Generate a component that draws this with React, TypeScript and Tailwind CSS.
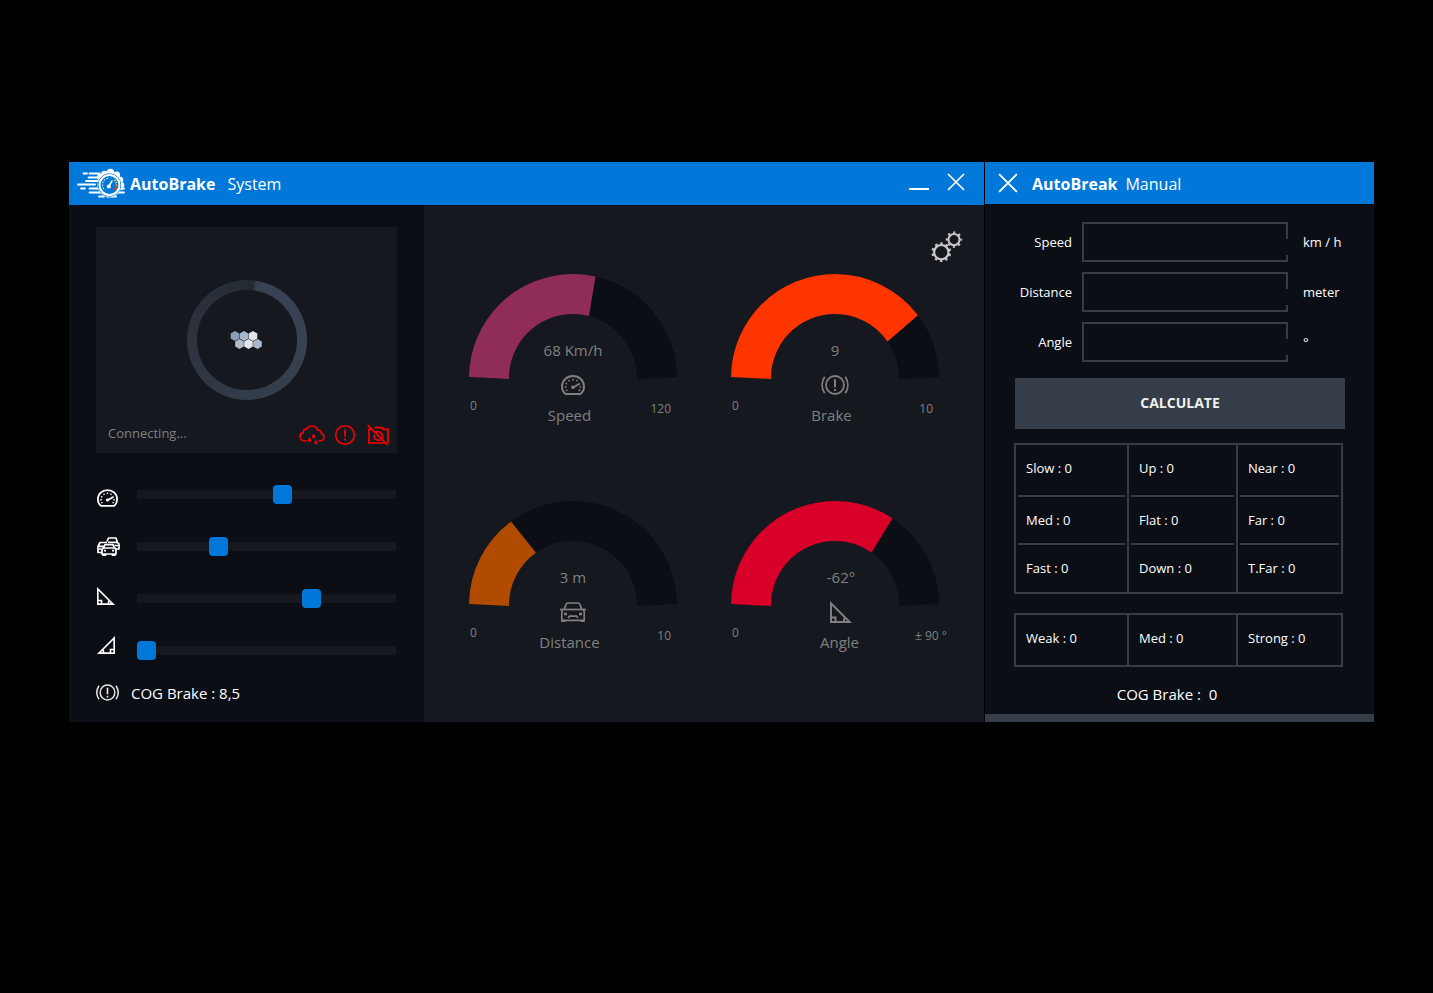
import type { ReactNode } from "react";

type IconProps = { className?: string };

function LogoIcon() {
  return (
    <svg viewBox="0 0 50 34" className="h-[34px] w-[50px]" aria-hidden="true">
      <g fill="#fff" transform="translate(-1 0)">
        <circle cx="33.500" cy="18" r="12" />
        <circle cx="24.500" cy="9.800" r="3.300" />
        <circle cx="28.500" cy="7" r="3.300" />
        <circle cx="34.500" cy="5.500" r="3.800" />
        <circle cx="40.500" cy="8" r="3.600" />
        <circle cx="44" cy="13" r="3.300" />
        <circle cx="45.300" cy="18.300" r="3" />
        <path d="M22 10h6v8h-6zM33.500 18h13v5h-13z" />
      </g>
      <path
        d="M6.500 6.500h3.500M12.500 6.500h10M11.500 10.500h11M9 14h12M1 17.500h17M4 21.500h4M12.500 21.500h12M12.500 25.500h12M39 25.500h8M41 21.500h6M22 29.500h5M30 29.500h9"
        stroke="#fff"
        strokeWidth="1.800"
        strokeLinecap="round"
      />
      <g transform="translate(-1 0)">
        <circle cx="33.500" cy="18" r="11.300" stroke="#0078d9" strokeWidth="0.900" fill="none" />
        <circle cx="33.500" cy="18" r="9.900" fill="#0078d9" stroke="#fff" strokeWidth="1.800" />
        <path d="M34.500 10.600l1.600.3M37 11.400l1.200.8" stroke="#2fa36b" strokeWidth="1.900" />
        <path d="M38.800 12.700l.9 1.400M40 15l.3 1.300" stroke="#e5d23a" strokeWidth="1.900" />
        <path d="M40.500 17.300v1.800" stroke="#f28a2c" strokeWidth="1.900" />
        <path d="M40.200 20.200l-1.400 2.900" stroke="#e2402f" strokeWidth="2.200" />
        <path d="M32 11.200c-3.800.8-5.700 3.700-5.400 7.200.2 2 1 3.500 2.300 4.600" stroke="#d8e8f7" strokeWidth="1.100" strokeDasharray="1.600 1.400" fill="none" />
        <path d="M33 19l3-5" stroke="#fff" strokeWidth="1.500" strokeLinecap="round" />
        <circle cx="32.800" cy="19.500" r="2" fill="#fff" />
      </g>
    </svg>
  );
}

function CloseIcon({ className }: IconProps) {
  return (
    <svg viewBox="0 0 18 18" className={className} stroke="#fff" strokeWidth="1.7" fill="none" aria-hidden="true">
      <path d="M1 1l16 16M17 1L1 17" />
    </svg>
  );
}

function GaugeIcon({ className }: IconProps) {
  return (
    <svg viewBox="0 0 24 20" className={className} fill="none" stroke="currentColor" aria-hidden="true">
      <path
        d="M4.500 19h15c2-1.600 3.500-4.500 3.500-7.500C23 5.300 18 1 12 1S1 5.300 1 11.500C1 14.500 2.500 17.400 4.500 19z"
        strokeWidth="2"
        strokeLinejoin="round"
      />
      <path
        d="M3.700 12h1.800M4.600 8.200l1.500.8M7.500 5l1 1.300M12 3.700v1.800M16.500 5l-1 1.300M18.600 12h1.700M4.800 15.700l1.500-.7M19.200 15.700l-1.500-.7"
        strokeWidth="1.500"
      />
      <path d="M12 12.500l7-4" strokeWidth="2" />
      <circle cx="12" cy="12.300" r="1.800" fill="currentColor" stroke="none" />
    </svg>
  );
}

function BrakeIcon({ className }: IconProps) {
  return (
    <svg viewBox="0 0 28 20" className={className} fill="none" stroke="currentColor" strokeWidth="1.800" aria-hidden="true">
      <circle cx="14" cy="10" r="9" />
      <path d="M3.700 1.800c-3.400 5-3.400 11.400 0 16.400M24.300 1.800c3.400 5 3.400 11.400 0 16.400" />
      <path d="M14 4.200v8M14 14v2" strokeWidth="2" />
    </svg>
  );
}

function CarIcon({ className }: IconProps) {
  return (
    <svg viewBox="0 0 26 20" className={className} fill="none" stroke="currentColor" strokeWidth="1.700" aria-hidden="true">
      <path d="M4.200 7.500l1.800-5C6.400 1.500 7 1 8 1h10c1 0 1.600.5 2 1.500l1.800 5" />
      <path d="M0 7.500h26" />
      <path d="M2.500 8L1.800 10v8.500M23.500 8l.7 2v8.500M1 18.300h24" />
      <path d="M1.500 19h4M20.500 19h4" strokeWidth="2" />
      <path d="M4 12h3M19 12h3" strokeWidth="2.400" />
      <path d="M8 16l1.500-1.800h7L18 16" />
    </svg>
  );
}

function CarsIcon({ className }: IconProps) {
  return (
    <svg viewBox="0 0 23 19" className={className} fill="none" stroke="currentColor" strokeWidth="1.700" strokeLinejoin="round" aria-hidden="true">
      <path d="M10 4.500L11.500 1h7.500l1.500 4.500L22 7v5h-3" />
      <path d="M11 5.300h10M17.500 8.500H21" />
      <path d="M5 15.500H1V9.500L3 5.500h7" />
      <path d="M2 9.300h5M2 12h2.500" />
      <path d="M6.500 11L8 7.700h8l1.500 3.300" />
      <path d="M6 11h12l1 2v4H5v-4z" />
      <path d="M6 17v1.200h2.500V17M15.500 17v1.200H18V17M7 13.700h2M15 13.700h2" />
    </svg>
  );
}

function TriangleIcon({ className }: IconProps) {
  return (
    <svg viewBox="0 0 22 22" className={className} fill="none" stroke="currentColor" strokeWidth="2" aria-hidden="true">
      <path d="M1 2.400V21h18.600z" />
      <path d="M1 16.500h4.500V21M15.500 16.500c-1.600 1-1.800 2.600-1.500 4.500" />
    </svg>
  );
}

function GearsIcon() {
  return (
    <svg viewBox="0 0 32 32" className="h-8 w-8" fill="none" stroke="#c9c9c9" aria-hidden="true">
      <circle cx="10.300" cy="21.200" r="7.200" strokeWidth="2.200" />
      <circle cx="10.300" cy="21.200" r="8.800" strokeWidth="2.200" strokeDasharray="2.300 3.229" strokeDashoffset="-1.600" />
      <circle cx="23" cy="8.600" r="5.600" strokeWidth="2.100" />
      <circle cx="23" cy="8.600" r="7.200" strokeWidth="2" strokeDasharray="2.200 3.455" strokeDashoffset="1.100" />
    </svg>
  );
}

function CloudRainIcon() {
  return (
    <svg viewBox="0 0 26 20" className="h-[20px] w-[26px]" fill="none" stroke="#fb0000" strokeWidth="1.600" strokeLinecap="round" aria-hidden="true">
      <path d="M7 15.800H5.500C3 15.800 1 14 1 11.700c0-2 1.500-3.500 3.200-3.800C4 5.500 5.500 3.800 7.600 4.200 8.500 2.300 10.500 1 13 1c3 0 5 1.700 5.600 4.200 2-.3 3.600 1 3.600 3 1.700.5 2.800 1.800 2.800 3.600 0 2.300-1.700 4-4 4h-.8" />
      <path d="M14.500 8.600c1 1.500 1.500 2.300 1.500 3.100a1.500 1.500 0 01-3 0c0-.8.500-1.600 1.500-3.100zM10.500 12.300c1 1.500 1.500 2.300 1.500 3.100a1.500 1.500 0 01-3 0c0-.8.500-1.600 1.500-3.100zM16.900 15c1 1.500 1.400 2.100 1.400 2.900a1.400 1.400 0 01-2.800 0c0-.8.400-1.400 1.400-2.900z" fill="#fb0000" stroke="none" />
    </svg>
  );
}

function AlertIcon() {
  return (
    <svg viewBox="0 0 22 22" className="h-[22px] w-[22px]" fill="none" stroke="#fb0000" strokeWidth="1.600" aria-hidden="true">
      <circle cx="11" cy="11" r="9.300" />
      <path d="M11 5.800v6.700M11 14.200v2" strokeWidth="1.800" />
    </svg>
  );
}

function CameraOffIcon() {
  return (
    <svg viewBox="0 0 22 22" className="h-[22px] w-[22px]" fill="none" stroke="#fb0000" strokeWidth="1.700" aria-hidden="true">
      <path d="M.7 1.200l20 20" />
      <path d="M7.500 3.700H15l1 1.600h5v14M2 4.500v14.500h15.500M2 5.500h2.500" />
      <path d="M8.800 8.300c3-1.600 6.600.4 6.700 3.900 0 1-.2 1.800-.6 2.500M13.500 15.800c-3.600 1.600-7-1-6.500-5" />
    </svg>
  );
}

const hexagons = [
  { x: 5, y: 6, fill: "#8b9fb8" },
  { x: 14, y: 6, fill: "#a8b7c9" },
  { x: 23, y: 6, fill: "#e1e5eb" },
  { x: 9.5, y: 14, fill: "#b0bdcd" },
  { x: 18.5, y: 14, fill: "#e1e5eb" },
  { x: 27.5, y: 14, fill: "#a8b7c9" },
];

function Spinner() {
  return (
    <div className="grid h-[120px] w-[120px] place-items-center rounded-full bg-[conic-gradient(#242b33_0deg,#232a32_6deg,#394252_10deg,#394252_80deg,#35404c_130deg,#323a47_200deg,#2b323c_280deg,#262c34_360deg)]">
      <div className="grid h-[100px] w-[100px] place-items-center rounded-full bg-[#15181f]">
        <svg viewBox="0 0 33 20" className="h-[20px] w-[33px]" aria-hidden="true">
          {hexagons.map((h) => (
            <path
              key={`${h.x}-${h.y}`}
              transform={`translate(${h.x} ${h.y})`}
              d="M0-5L4.300-2.500V2.500L0 5-4.300 2.500V-2.500z"
              fill={h.fill}
            />
          ))}
        </svg>
      </div>
    </div>
  );
}

const sliders = [
  { id: "speed", label: "Speed", max: 120, value: 68, icon: <GaugeIcon className="h-[18px] w-[21px]" /> },
  { id: "distance", label: "Distance", max: 10, value: 3, icon: <CarsIcon className="h-[19px] w-[23px]" /> },
  { id: "down", label: "Downhill angle", max: 90, value: 62, icon: <TriangleIcon className="h-[18px] w-[18px]" /> },
  { id: "up", label: "Uphill angle", max: 90, value: 0, icon: <TriangleIcon className="h-[18px] w-[18px] -scale-x-100" /> },
];

function Sidebar() {
  return (
    <aside className="bg-[#0b0e15] px-[27px] pt-[22px] pb-[14px]">
      <div className="flex h-[226px] flex-col items-center bg-[#15181f] pt-[53px]">
        <Spinner />
        <div className="mt-auto flex h-[36px] w-full items-center pr-2 pl-3">
          <span className="pb-[2px] text-[13px] text-[#808080]">Connecting...</span>
          <div className="ml-auto flex items-center gap-[11px]">
            <div className="flex items-center gap-[9px]">
              <CloudRainIcon />
              <AlertIcon />
            </div>
            <CameraOffIcon />
          </div>
        </div>
      </div>

      <div className="mt-[15px] flex gap-[17px] pr-px text-white">
        <div className="flex w-6 flex-col pt-[5px]">
          {sliders.map((s) => (
            <label key={s.id} htmlFor={s.id} aria-label={s.label} className="flex h-[49px] items-center pl-px">
              {s.icon}
            </label>
          ))}
        </div>
        <div className="flex flex-1 flex-col">
          {sliders.map((s) => (
            <div key={s.id} className="flex h-[52px] items-center">
              <input
                id={s.id}
                type="range"
                min={0}
                max={s.max}
                defaultValue={s.value}
                className="m-0 h-[19px] w-full appearance-none bg-transparent [&::-webkit-slider-runnable-track]:h-[9px] [&::-webkit-slider-runnable-track]:bg-[#15181f] [&::-webkit-slider-thumb]:-mt-[5px] [&::-webkit-slider-thumb]:h-[19px] [&::-webkit-slider-thumb]:w-[19px] [&::-webkit-slider-thumb]:appearance-none [&::-webkit-slider-thumb]:rounded-[4px] [&::-webkit-slider-thumb]:bg-[#0078d9]"
              />
            </div>
          ))}
        </div>
      </div>

      <div className="flex h-8 items-center gap-3 text-white">
        <BrakeIcon className="h-[17px] w-[23px] text-[#e4e4e4]" />
        <span className="pt-[2px] text-[15px]">COG Brake : 8,5</span>
      </div>
    </aside>
  );
}

type GaugeProps = {
  name: string;
  value: string;
  max: string;
  color: string;
  outerX: number;
  innerX: number;
  icon: ReactNode;
  shifted?: boolean;
};

const arcY = (radius: number, x: number) => 104 - Math.sqrt(radius * radius - (x - 104) * (x - 104));

function bandPath(outerX: number, innerX: number) {
  const outerTop = outerX > 104 ? "A104 104 0 0 1 104 0" : "";
  const innerTop = innerX > 104 ? "A64 64 0 0 0 104 40" : "";
  return `M0 103${outerTop}A104 104 0 0 1 ${outerX} ${arcY(104, outerX)}L${innerX} ${arcY(64, innerX)}${innerTop}A64 64 0 0 0 40 105z`;
}

function Gauge({ name, value, max, color, outerX, innerX, icon, shifted }: GaugeProps) {
  return (
    <figure className="grid h-[153px] text-[#808080]">
      <svg viewBox="0 0 208 106" className="col-start-1 row-start-1 h-[106px] w-[208px]" aria-hidden="true">
        <path
          d="M0 103A104 104 0 0 1 104 0A104 104 0 0 1 208 103L168 105A64 64 0 0 0 104 40A64 64 0 0 0 40 105z"
          fill="#0b0e15"
        />
        <path d={bandPath(outerX, innerX)} fill={color} />
      </svg>
      <figcaption className="col-start-1 row-start-1 flex flex-col pt-[66px]">
        <div className={shifted ? "flex flex-col items-center pl-3" : "flex flex-col items-center"}>
          <span className="text-[15px] leading-5">{value}</span>
          <span className="mt-[13px] flex h-6 items-center">{icon}</span>
        </div>
        <div className="-mt-px grid grid-cols-[1fr_auto_1fr] items-start pl-px">
          <span className="text-[12px] leading-5 whitespace-nowrap">0</span>
          <span className={shifted ? "pt-[9px] pl-2 text-[15px] leading-5" : "pt-[9px] pr-2 text-[15px] leading-5"}>{name}</span>
          <span
            className={
              shifted
                ? "-mr-2 justify-self-end pt-[3px] text-[12px] leading-5 whitespace-nowrap"
                : "justify-self-end pt-[3px] pr-[6px] text-[12px] leading-5 whitespace-nowrap"
            }
          >
            {max}
          </span>
        </div>
      </figcaption>
    </figure>
  );
}

const gauges: GaugeProps[] = [
  { name: "Speed", value: "68 Km/h", max: "120", color: "#902d56", outerX: 126.5, innerX: 120, icon: <GaugeIcon className="h-[20px] w-6" /> },
  { name: "Brake", value: "9", max: "10", color: "#ff3500", outerX: 187, innerX: 156.5, icon: <BrakeIcon className="h-[20px] w-[28px]" /> },
  { name: "Distance", value: "3 m", max: "10", color: "#b04b00", outerX: 42, innerX: 67, icon: <CarIcon className="h-[20px] w-[26px]" /> },
  { name: "Angle", value: "-62°", max: "± 90 °", color: "#d80028", outerX: 161.5, innerX: 140.5, icon: <TriangleIcon className="h-[22px] w-[22px]" />, shifted: true },
];

function Dashboard() {
  return (
    <main className="bg-[#15181f] pt-[26px]">
      <div className="flex justify-end pr-[21px]">
        <button type="button" aria-label="Settings">
          <GearsIcon />
        </button>
      </div>
      <div className="mt-[11px] grid grid-cols-[208px_208px] justify-center gap-x-[54px] gap-y-[74px]">
        {gauges.map((g) => (
          <Gauge key={g.name} {...g} />
        ))}
      </div>
    </main>
  );
}

const fields = [
  { id: "manual-speed", label: "Speed", unit: "km / h" },
  { id: "manual-distance", label: "Distance", unit: "meter" },
  { id: "manual-angle", label: "Angle", unit: "°" },
];

const fuzzyRows = [
  ["Slow : 0", "Up : 0", "Near : 0"],
  ["Med : 0", "Flat : 0", "Far : 0"],
  ["Fast : 0", "Down : 0", "T.Far : 0"],
];

function cellClass(row: number, count: number) {
  if (count === 1) return "mx-[2px] flex h-[50px] items-center pb-[2px] pl-2";
  if (row === 0) return "mx-[2px] flex h-[52px] items-center border-b-2 border-[#343d48] pb-[2px] pl-2";
  if (row < count - 1) return "mx-[2px] flex h-[48px] items-center border-b-2 border-[#343d48] pt-[2px] pl-2";
  return "mx-[2px] flex h-[47px] items-center pl-2";
}

function ValueTable({ rows }: { rows: string[][] }) {
  return (
    <table className="w-full table-fixed border-separate border-spacing-0 border-2 border-[#343d48] text-[13px]">
      <colgroup>
        <col className="w-[111px]" />
        <col className="w-[109px]" />
        <col />
      </colgroup>
      <tbody>
        {rows.map((row, r) => (
          <tr key={row[0]}>
            {row.map((cell, c) => (
              <td key={cell} className={c > 0 ? "border-l-2 border-[#343d48] p-0" : "p-0"}>
                <div className={cellClass(r, rows.length)}>{cell}</div>
              </td>
            ))}
          </tr>
        ))}
      </tbody>
    </table>
  );
}

function ManualPanel() {
  return (
    <section className="flex w-[389px] shrink-0 flex-col bg-[#0b0e15] text-white">
      <header className="flex h-[42px] items-center bg-[#0078d9] pl-[13px] text-[16px]">
        <button type="button" aria-label="Close manual panel">
          <CloseIcon className="h-5 w-5" />
        </button>
        <h2 className="flex gap-2 pt-[2px] pl-[14px]">
          <b className="font-bold">AutoBreak</b>
          <span>Manual</span>
        </h2>
      </header>

      <form className="pt-[18px]" onSubmit={(e) => e.preventDefault()}>
        <div className="flex flex-col gap-[10px] text-[13px]">
          {fields.map((f) => (
            <div key={f.id} className="grid grid-cols-[87px_1fr_71px] items-center">
              <label htmlFor={f.id} className="justify-self-end pt-[2px]">
                {f.label}
              </label>
              <div className="relative mr-[15px] ml-[10px]">
                <input
                  id={f.id}
                  type="text"
                  className="block h-10 w-full border-2 border-[#343d48] bg-transparent px-2 outline-none"
                />
                <span className="absolute top-[17px] right-0 h-4 w-[2px] bg-[#0b0e15]" />
              </div>
              <span className="pt-[2px]">{f.unit}</span>
            </div>
          ))}
        </div>
        <div className="pt-4 pr-[29px] pl-[30px]">
          <button type="submit" className="h-[51px] w-full bg-[#343d48] pb-[2px] text-[14px] font-bold text-[#f0f0f0]">
            CALCULATE
          </button>
        </div>
      </form>

      <div className="flex flex-col gap-[19px] pt-[14px] pr-[31px] pl-[29px]">
        <ValueTable rows={fuzzyRows} />
        <ValueTable rows={[["Weak : 0", "Med : 0", "Strong : 0"]]} />
      </div>
      <p className="mt-[15px] mb-2 pr-[25px] text-center text-[15px] leading-6 whitespace-pre">COG Brake :  0</p>
      <div className="mt-auto h-2 bg-[#343d48]" />
    </section>
  );
}

export default function App() {
  return (
    <div className="flex min-h-screen items-start gap-px bg-black pt-[162px] pr-[59px] pl-[69px] font-['Open_Sans',sans-serif]">
      <section className="flex-1">
        <header className="flex h-[43px] items-center bg-[#0078d9] pr-[19px] pl-2 text-[16px] text-white">
          <LogoIcon />
          <h1 className="flex gap-3 pl-[3px]">
            <b className="font-bold">AutoBrake</b>
            <span>System</span>
          </h1>
          <div className="ml-auto flex items-center gap-[18px] pb-[3px]">
            <button type="button" aria-label="Minimize" className="flex h-[18px] w-5 items-end pb-px">
              <span className="h-[2px] w-full bg-white" />
            </button>
            <button type="button" aria-label="Close">
              <CloseIcon className="h-[18px] w-[18px]" />
            </button>
          </div>
        </header>
        <div className="grid grid-cols-[355px_1fr]">
          <Sidebar />
          <Dashboard />
        </div>
      </section>
      <ManualPanel />
    </div>
  );
}
